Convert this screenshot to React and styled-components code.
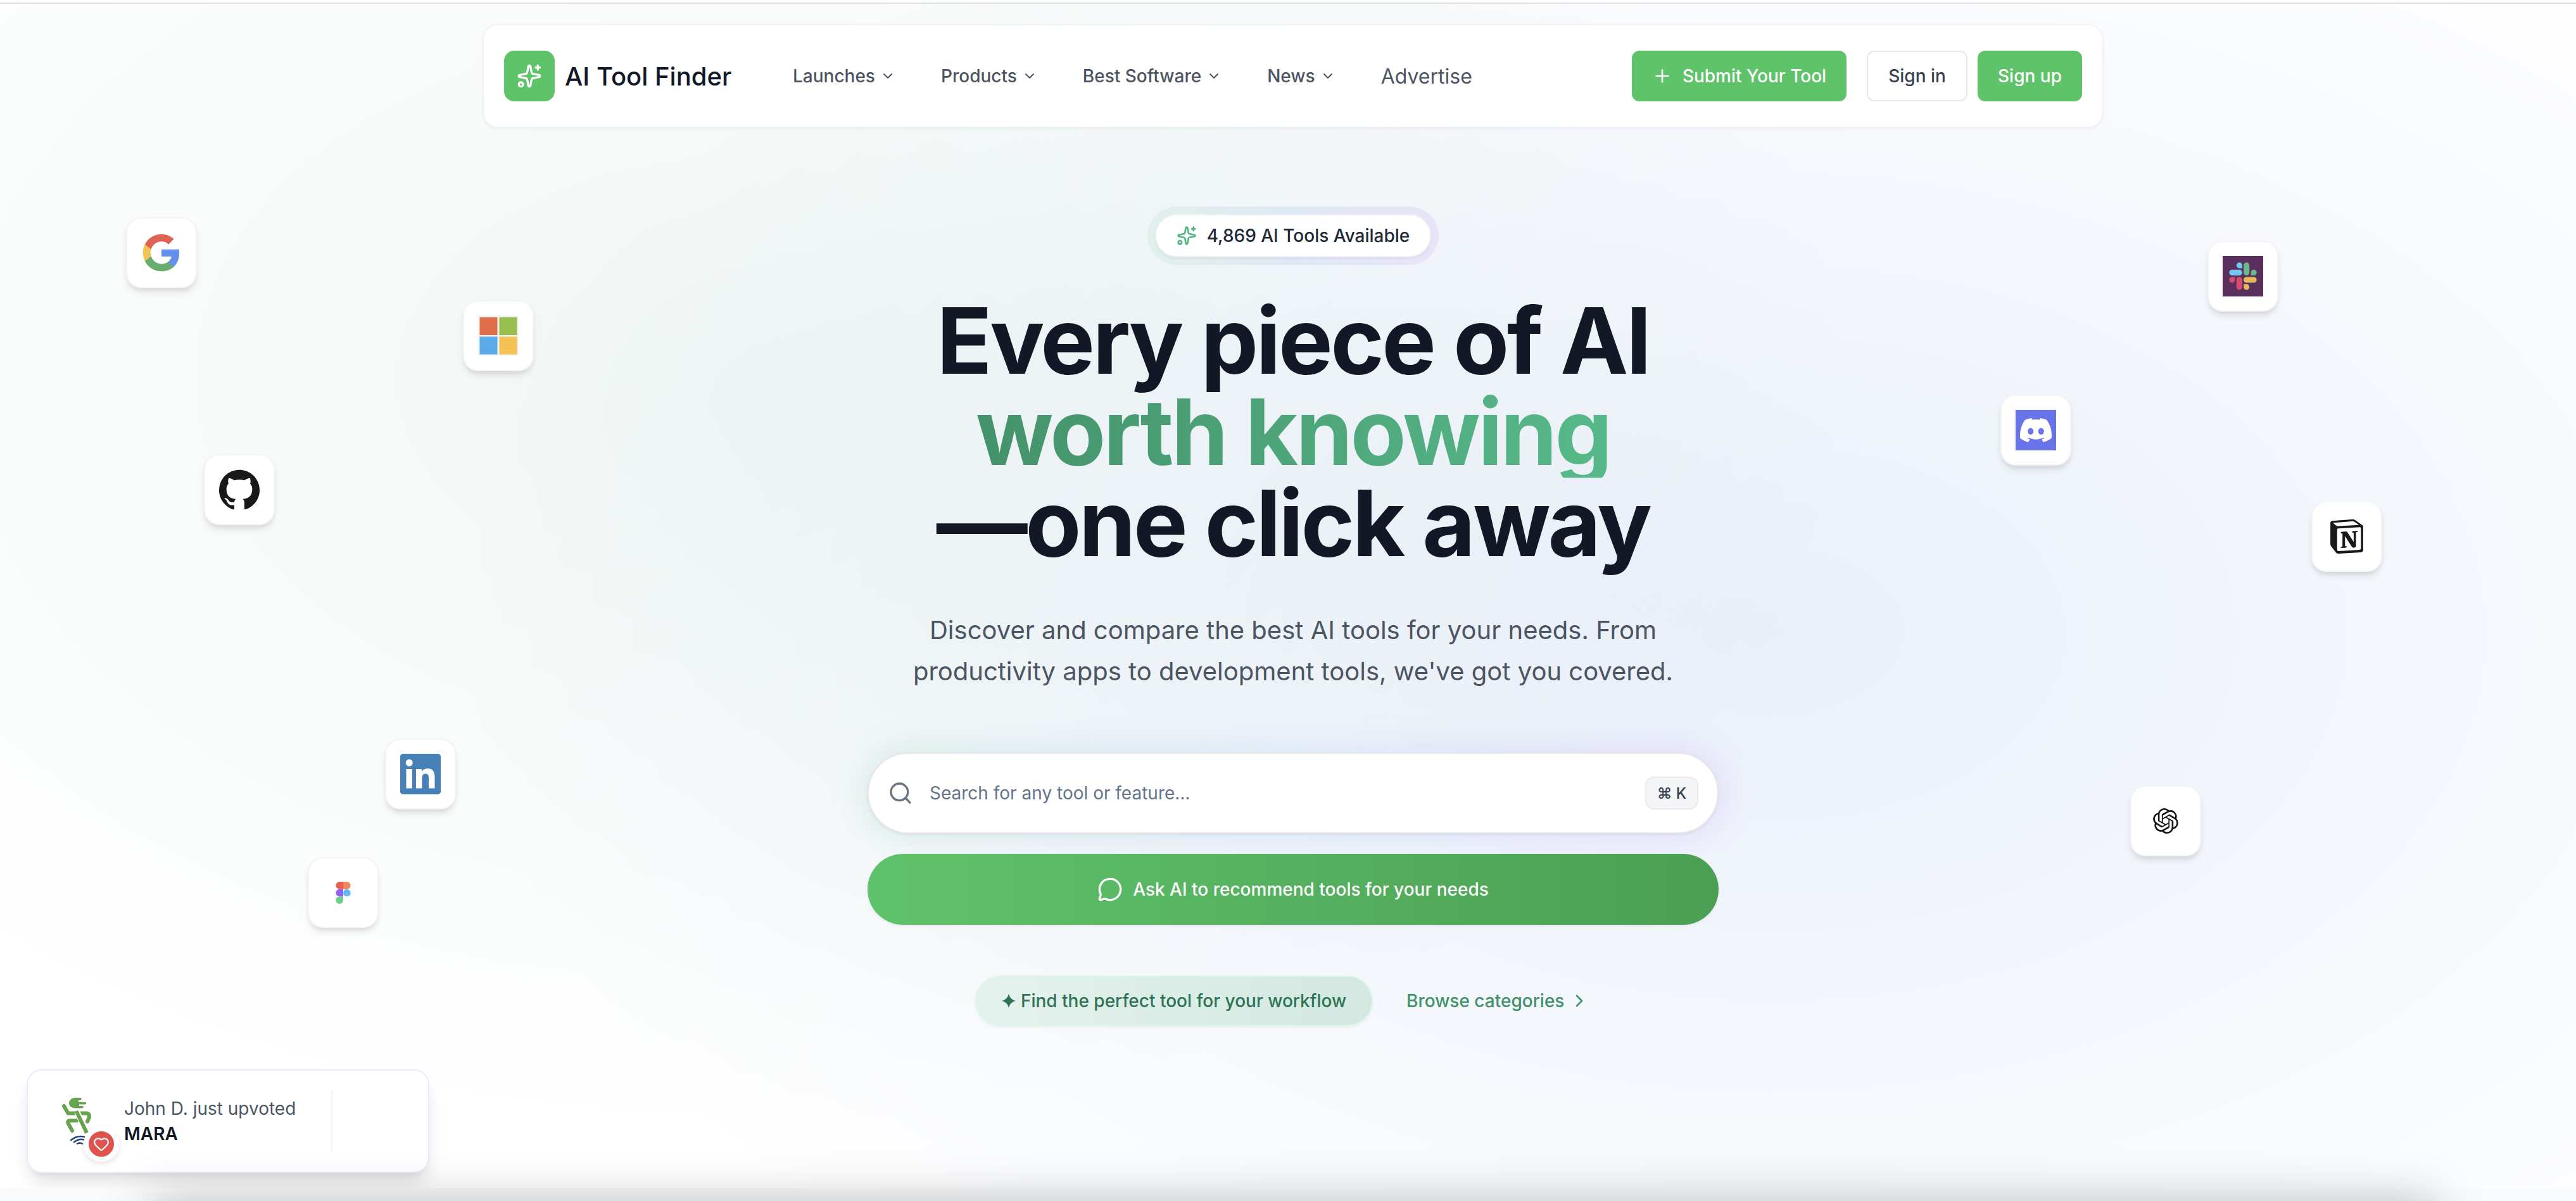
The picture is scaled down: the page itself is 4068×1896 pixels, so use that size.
import React from "react";
import styled, { createGlobalStyle } from "styled-components";
import { Sparkles, ChevronDown, ChevronRight, Plus, Search, MessageCircle, Heart } from "lucide-react";
import { SiNotion, SiOpenai, SiDiscord } from "react-icons/si";

const Global = createGlobalStyle`
  * { box-sizing: border-box; }
  html, body { margin: 0; overflow: hidden; background: #fff; }
  body { font-family: Inter, "Liberation Sans", sans-serif; color: #111827; -webkit-font-smoothing: antialiased; }
  h1, p { margin: 0; }
  button { font: inherit; border: 0; padding: 0; }
`;

const Page = styled.div`
  position: relative;
  width: 4084px;
  height: 1896px;
  overflow: hidden;
  display: flex;
  flex-direction: column;
  align-items: center;
  background:
    radial-gradient(ellipse 1800px 1200px at 1150px 600px, rgba(60, 140, 110, 0.075), rgba(60, 140, 110, 0) 100%),
    radial-gradient(ellipse 2100px 1350px at 2800px 1000px, rgba(20, 80, 190, 0.09), rgba(20, 80, 190, 0) 100%),
    #fff;
`;

const BrowserEdge = styled.div`
  width: 100%;
  height: 6px;
  flex: none;
  background: #fff;
  border-bottom: 2px solid #dfe0e0;
`;

const Header = styled.header`
  width: 2560px;
  height: 164px;
  flex: none;
  margin-top: 32px;
  padding: 0 32px;
  display: flex;
  align-items: center;
  background: #fff;
  background-clip: padding-box;
  border: 2px solid rgba(236, 238, 241, 0.6);
  border-radius: 24px;
  box-shadow: 0 2px 4px rgba(0, 0, 0, 0.04);
`;

const Logo = styled.div`
  display: flex;
  align-items: center;
  gap: 16px;
  width: 424px;
  font-size: 40px;
  font-weight: 500;
  white-space: nowrap;
`;

const LogoMark = styled.span`
  width: 80px;
  height: 80px;
  flex: none;
  display: grid;
  place-items: center;
  border-radius: 16px;
  background: #5fc369;
  color: #fff;
`;

const Nav = styled.nav`
  display: flex;
  align-items: center;
  gap: 8px;
`;

const NavItem = styled.a`
  display: flex;
  align-items: center;
  gap: 8px;
  padding: 0 32px;
  font-size: ${(p) => (p.$large ? 32 : 28)}px;
  font-weight: ${(p) => (p.$large ? 400 : 500)};
  color: #4b5563;
  white-space: nowrap;
`;

const Actions = styled.div`
  display: flex;
  gap: 16px;
  margin-left: auto;
`;

const Button = styled.button`
  height: 80px;
  width: ${(p) => p.$width}px;
  margin-right: ${(p) => p.$after || 0}px;
  display: flex;
  align-items: center;
  justify-content: center;
  gap: 16px;
  border-radius: 12px;
  font-size: 28px;
  font-weight: 500;
  white-space: nowrap;
  background: ${(p) => (p.$outline ? "#fff" : "#5fc369")};
  color: ${(p) => (p.$outline ? "#374151" : "#fff")};
  border: ${(p) => (p.$outline ? "2px solid #e5e7eb" : "0")};
`;

const Hero = styled.main`
  display: flex;
  flex-direction: column;
  align-items: center;
  padding-top: 124px;
`;

const BadgeGlow = styled.div`
  height: 92px;
  padding: 12px;
  border-radius: 46px;
  background: linear-gradient(90deg, #e0f0eb, #dfe9f6 50%, #e9e4f8);
`;

const Badge = styled.div`
  width: 436px;
  height: 68px;
  display: flex;
  align-items: center;
  justify-content: center;
  gap: 16px;
  border: 2px solid #eff1f3;
  border-radius: 34px;
  background: #fff;
  box-shadow: 0 2px 4px rgba(0, 0, 0, 0.06);
  font-size: 28px;
  font-weight: 500;
  color: #1f2937;
  white-space: nowrap;
  svg { color: #50b581; }
`;

const Title = styled.h1`
  margin-top: 48px;
  display: flex;
  flex-direction: column;
  align-items: center;
  font-size: 144px;
  line-height: 144px;
  font-weight: 700;
  letter-spacing: -0.025em;
  color: #121826;
  white-space: nowrap;
`;

const Accent = styled.span`
  background: linear-gradient(90deg, #44926b, #57b989);
  -webkit-background-clip: text;
  background-clip: text;
  color: transparent;
`;

const Lead = styled.p`
  margin-top: 64px;
  width: 1344px;
  font-size: 40px;
  line-height: 65px;
  color: #4b5563;
  text-align: center;
`;

const SearchBox = styled.div`
  position: relative;
  margin-top: 96px;
  width: 1344px;
  height: 128px;
  display: flex;
  align-items: center;
  padding: 0 30px;
  border: 2px solid #e5e7eb;
  border-radius: 64px;
  background: #fff;
  box-shadow: 0 2px 4px rgba(0, 0, 0, 0.06);
  color: #6b7280;
  &::before {
    content: "";
    position: absolute;
    z-index: -1;
    inset: -8px;
    border-radius: 72px;
    background: linear-gradient(90deg, rgba(90, 185, 140, 0.18), rgba(110, 160, 250, 0.18), rgba(170, 110, 245, 0.18));
    filter: blur(24px);
  }
`;

const Isolate = styled.div`
  position: relative;
  z-index: 0;
`;

const Placeholder = styled.span`
  flex: 1;
  margin-left: 26px;
  font-size: 28px;
  color: #64748b;
`;

const Kbd = styled.kbd`
  width: 84px;
  height: 52px;
  display: grid;
  place-items: center;
  border: 2px solid #e9eaed;
  border-radius: 14px;
  background: #f4f5f6;
  font: 500 24px Inter, "DejaVu Sans", sans-serif;
  color: #374151;
`;

const AskButton = styled.button`
  margin-top: 32px;
  width: 1344px;
  height: 112px;
  display: flex;
  align-items: center;
  justify-content: center;
  gap: 16px;
  border-radius: 56px;
  background: linear-gradient(90deg, #5fc36b, #4b9f53);
  color: #fff;
  font-size: 28px;
  font-weight: 500;
  box-shadow: 0 2px 4px rgba(0, 0, 0, 0.06);
`;

const Links = styled.div`
  margin-top: 80px;
  width: 1004px;
  display: flex;
  align-items: center;
  gap: 53px;
  font-size: 28px;
  font-weight: 500;
  white-space: nowrap;
`;

const Workflow = styled.span`
  width: 628px;
  height: 80px;
  display: flex;
  align-items: center;
  justify-content: center;
  gap: 8px;
  border: 2px solid #dcf6e7;
  border-radius: 40px;
  background: linear-gradient(90deg, #e4f2ed, #d2e8e1);
  box-shadow: 0 2px 4px rgba(0, 0, 0, 0.05);
  color: #2f7354;
`;

const Browse = styled.a`
  display: flex;
  align-items: center;
  gap: 8px;
  color: #419169;
`;

const Tile = styled.div`
  position: absolute;
  left: ${(p) => p.$x}px;
  top: ${(p) => p.$y}px;
  width: 112px;
  height: 112px;
  display: grid;
  place-items: center;
  border: 2px solid #f3f4f5;
  border-radius: 24px;
  background: #fff;
  box-shadow: 0 8px 12px -2px rgba(0, 0, 0, 0.1), 0 4px 8px -4px rgba(0, 0, 0, 0.1);
  svg { display: block; }
`;

const Toast = styled.aside`
  position: absolute;
  left: 42px;
  top: 1688px;
  width: 636px;
  height: 164px;
  display: flex;
  align-items: center;
  padding-left: 40px;
  border: 2px solid #f1e7fd;
  border-radius: 24px;
  background: #fff;
  box-shadow: 0 20px 30px -6px rgba(0, 0, 0, 0.12), 0 8px 12px -8px rgba(0, 0, 0, 0.1);
`;

const Avatar = styled.div`
  position: relative;
  width: 96px;
  height: 96px;
  flex: none;
`;

const HeartBadge = styled.span`
  position: absolute;
  left: 48px;
  top: 56px;
  width: 56px;
  height: 56px;
  display: grid;
  place-items: center;
  border: 8px solid #fff;
  border-radius: 50%;
  background: #df534e;
  color: #fff;
  box-shadow: 0 4px 8px rgba(0, 0, 0, 0.1);
`;

const ToastText = styled.div`
  width: 327px;
  margin-left: 16px;
  font-size: 28px;
  line-height: 40px;
  color: #4b5563;
  strong { display: block; font-weight: 600; color: #111827; }
`;

const Divider = styled.i`
  width: 2px;
  height: 96px;
  background: #f1f2f4;
`;

const BottomShade = styled.div`
  position: absolute;
  left: 0;
  right: 0;
  bottom: 0;
  height: 20px;
  background: #f9fafb;
  &::before {
    content: "";
    position: absolute;
    left: 237px;
    right: 237px;
    top: 22px;
    height: 200px;
    box-shadow: 0 0 80px rgba(0, 0, 0, 0.25);
  }
`;

const Google = () => (
  <svg width="64" height="64" viewBox="0 0 24 24">
    <path fill="#6490ec" d="M22.56 12.25c0-.78-.07-1.53-.2-2.25H12v4.26h5.92c-.26 1.37-1.04 2.53-2.21 3.31v2.77h3.57c2.08-1.92 3.28-4.74 3.28-8.09z" />
    <path fill="#69ad6e" d="M12 23c2.97 0 5.46-.98 7.28-2.66l-3.57-2.77c-.98.66-2.23 1.06-3.71 1.06-2.86 0-5.29-1.93-6.16-4.53H2.18v2.84C3.99 20.53 7.7 23 12 23z" />
    <path fill="#f2c356" d="M5.84 14.09c-.22-.66-.35-1.36-.35-2.09s.13-1.43.35-2.09V7.07H2.18C1.43 8.55 1 10.22 1 12s.43 3.45 1.18 4.93l2.85-2.22.81-.62z" />
    <path fill="#dd6353" d="M12 5.38c1.62 0 3.06.56 4.21 1.64l3.15-3.15C17.45 2.09 14.97 1 12 1 7.7 1 3.99 3.47 2.18 7.07l3.66 2.84c.87-2.6 3.3-4.53 6.16-4.53z" />
  </svg>
);

const Microsoft = () => (
  <svg width="64" height="64" viewBox="0 0 64 64">
    <rect width="64" height="64" fill="#f3f3f3" />
    <rect x="2.5" y="3" width="28" height="28" fill="#e16f4a" />
    <rect x="33.5" y="3" width="28" height="28" fill="#98bf4d" />
    <rect x="2.5" y="33.500" width="28" height="28" fill="#5baae9" />
    <rect x="33.5" y="33.500" width="28" height="28" fill="#f4c254" />
  </svg>
);

const Github = () => (
  <svg width="64" height="64" viewBox="0 0 24 24">
    <path fill="#181a19" d="M12 .297c-6.63 0-12 5.373-12 12 0 5.303 3.438 9.8 8.205 11.385.6.113.82-.258.82-.577 0-.285-.01-1.04-.015-2.04-3.338.724-4.042-1.61-4.042-1.61C4.422 18.07 3.633 17.7 3.633 17.7c-1.087-.744.084-.729.084-.729 1.205.084 1.838 1.236 1.838 1.236 1.07 1.835 2.809 1.305 3.495.998.108-.776.417-1.305.76-1.605-2.665-.3-5.466-1.332-5.466-5.93 0-1.31.465-2.38 1.235-3.22-.135-.303-.54-1.523.105-3.176 0 0 1.005-.322 3.3 1.23.96-.267 1.98-.399 3-.405 1.02.006 2.04.138 3 .405 2.28-1.552 3.285-1.23 3.285-1.23.645 1.653.24 2.873.12 3.176.765.84 1.23 1.91 1.23 3.22 0 4.61-2.805 5.625-5.475 5.92.42.36.81 1.096.81 2.22 0 1.606-.015 2.896-.015 3.286 0 .315.21.69.825.57C20.565 22.092 24 17.592 24 12.297c0-6.627-5.373-12-12-12" />
  </svg>
);

const Linkedin = () => (
  <svg width="64" height="64" viewBox="0 0 24 24">
    <path fill="#4780b7" d="M20.447 20.452h-3.554v-5.569c0-1.328-.027-3.037-1.852-3.037-1.853 0-2.136 1.445-2.136 2.939v5.667H9.351V9h3.414v1.561h.046c.477-.9 1.637-1.85 3.37-1.85 3.601 0 4.267 2.37 4.267 5.455v6.286zM5.337 7.433c-1.144 0-2.063-.926-2.063-2.065 0-1.138.92-2.063 2.063-2.063 1.14 0 2.064.925 2.064 2.063 0 1.139-.925 2.065-2.064 2.065zm1.782 13.019H3.555V9h3.564v11.452zM22.225 0H1.771C.792 0 0 .774 0 1.729v20.542C0 23.227.792 24 1.771 24h20.451C23.2 24 24 23.227 24 22.271V1.729C24 .774 23.2 0 22.222 0h.003z" />
  </svg>
);

const Figma = () => (
  <svg width="24" height="35" viewBox="0 0 24 36">
    <path fill="#eb5e53" d="M12 0H6a6 6 0 0 0 0 12h6z" />
    <path fill="#f0885e" d="M12 0h6a6 6 0 0 1 0 12h-6z" />
    <path fill="#8c63f3" d="M12 12H6a6 6 0 0 0 0 12h6z" />
    <circle cx="18" cy="18" r="6" fill="#63b8f9" />
    <path fill="#71cd89" d="M12 24H6a6 6 0 1 0 6 6z" />
  </svg>
);

const Slack = () => (
  <svg width="64" height="64" viewBox="0 0 64 64">
    <rect width="64" height="64" fill="#592f5d" />
    <g transform="translate(10.300 10.300) scale(1.808)">
      <path fill="#d44b6b" d="M5.042 15.165a2.528 2.528 0 0 1-2.520 2.523A2.528 2.528 0 0 1 0 15.165a2.527 2.527 0 0 1 2.522-2.520h2.520v2.520zM6.313 15.165a2.527 2.527 0 0 1 2.521-2.520 2.527 2.527 0 0 1 2.521 2.520v6.313A2.528 2.528 0 0 1 8.834 24a2.528 2.528 0 0 1-2.521-2.522v-6.313z" />
      <path fill="#74c7ec" d="M8.834 5.042a2.528 2.528 0 0 1-2.521-2.520A2.528 2.528 0 0 1 8.834 0a2.528 2.528 0 0 1 2.521 2.522v2.520H8.834zM8.834 6.313a2.528 2.528 0 0 1 2.521 2.521 2.528 2.528 0 0 1-2.521 2.521H2.522A2.528 2.528 0 0 1 0 8.834a2.528 2.528 0 0 1 2.522-2.521h6.312z" />
      <path fill="#6bb88e" d="M18.956 8.834a2.528 2.528 0 0 1 2.522-2.521A2.528 2.528 0 0 1 24 8.834a2.528 2.528 0 0 1-2.522 2.521h-2.522V8.834zM17.688 8.834a2.528 2.528 0 0 1-2.523 2.521 2.527 2.527 0 0 1-2.520-2.521V2.522A2.527 2.527 0 0 1 15.165 0a2.528 2.528 0 0 1 2.523 2.522v6.312z" />
      <path fill="#e6ba5c" d="M15.165 18.956a2.528 2.528 0 0 1 2.523 2.522A2.528 2.528 0 0 1 15.165 24a2.527 2.527 0 0 1-2.520-2.522v-2.522h2.520zM15.165 17.688a2.527 2.527 0 0 1-2.520-2.523 2.526 2.526 0 0 1 2.520-2.520h6.313A2.527 2.527 0 0 1 24 15.165a2.528 2.528 0 0 1-2.522 2.523h-6.313z" />
    </g>
  </svg>
);

const DiscordBox = styled.span`
  width: 64px;
  height: 64px;
  display: grid;
  place-items: center;
  background: #6974eb;
  color: #fff;
`;

const Mascot = () => (
  <svg width="96" height="96" viewBox="84 1722 96 96" fill="none" stroke="#68a34f" strokeLinecap="round" strokeLinejoin="round">
    <path fill="#68a34f" stroke="none" d="M118 1733h9c3 0 2 4-1 4h-2v3h10c3 0 3 3.500 0 3.500h-9v2.500h5c3 0 2 3.500-1 3.500h-11c-12-1-12-15 0-16.500z" />
    <path strokeWidth="6" d="M101 1746l6.500 11.500h30q4 1 3.500 6l-3 7" />
    <path strokeWidth="6" d="M121 1769h-12q-3 1-1 5l6 11" />
    <path stroke="#fff" strokeWidth="9" strokeLinecap="butt" d="M121.500 1755l15.500 32" />
    <path strokeWidth="6" strokeLinecap="butt" d="M120.500 1754l16.500 34.500" />
    <path stroke="#27457f" strokeWidth="2.500" d="M112 1800q9-8 21-5.500M117 1803q8-6 16-3.500M122 1805.500q4-2 8 0" />
  </svg>
);

const navItems = ["Launches", "Products", "Best Software", "News"];

const tiles = [
  { x: 199, y: 343, icon: <Google /> },
  { x: 731, y: 474, icon: <Microsoft /> },
  { x: 322, y: 717, icon: <Github /> },
  { x: 608, y: 1166, icon: <Linkedin /> },
  { x: 486, y: 1353, icon: <Figma /> },
  { x: 3486, y: 380, icon: <Slack /> },
  { x: 3159, y: 623, icon: <DiscordBox><SiDiscord size={50} /></DiscordBox> },
  { x: 3650, y: 791, icon: <SiNotion size={54} color="#181a19" /> },
  { x: 3364, y: 1240, icon: <SiOpenai size={40} color="#181a19" /> },
];

export default function App() {
  return (
    <Page>
      <Global />
      <BrowserEdge />
      <Header>
        <Logo>
          <LogoMark><Sparkles size={40} /></LogoMark>
          AI Tool Finder
        </Logo>
        <Nav>
          {navItems.map((label) => (
            <NavItem key={label}>{label}<ChevronDown size={24} /></NavItem>
          ))}
          <NavItem $large>Advertise</NavItem>
        </Nav>
        <Actions>
          <Button $width={339} $after={16}><Plus size={32} />Submit Your Tool</Button>
          <Button $width={159} $outline>Sign in</Button>
          <Button $width={165}>Sign up</Button>
        </Actions>
      </Header>
      <Isolate>
        <Hero>
          <BadgeGlow>
            <Badge><Sparkles size={32} />4,869 AI Tools Available</Badge>
          </BadgeGlow>
          <Title>
            <span>Every piece of AI</span>
            <Accent>worth knowing</Accent>
            <span>—one click away</span>
          </Title>
          <Lead>
            Discover and compare the best AI tools for your needs. From
            productivity apps to development tools, we've got you covered.
          </Lead>
          <SearchBox>
            <Search size={40} />
            <Placeholder>Search for any tool or feature...</Placeholder>
            <Kbd>⌘ K</Kbd>
          </SearchBox>
          <AskButton><MessageCircle size={40} />Ask AI to recommend tools for your needs</AskButton>
          <Links>
            <Workflow>
              <svg width="22" height="22" viewBox="0 0 22 22"><path fill="currentColor" d="M11 0q2 9 11 11-9 2-11 11-2-9-11-11 9-2 11-11z" /></svg>
              Find the perfect tool for your workflow
            </Workflow>
            <Browse>Browse categories<ChevronRight size={32} /></Browse>
          </Links>
        </Hero>
      </Isolate>
      {tiles.map((t) => (
        <Tile key={t.x} $x={t.x} $y={t.y}>{t.icon}</Tile>
      ))}
      <Toast>
        <Avatar>
          <Mascot />
          <HeartBadge><Heart size={26} /></HeartBadge>
        </Avatar>
        <ToastText>John D. just upvoted<strong>MARA</strong></ToastText>
        <Divider />
      </Toast>
      <BottomShade />
    </Page>
  );
}
